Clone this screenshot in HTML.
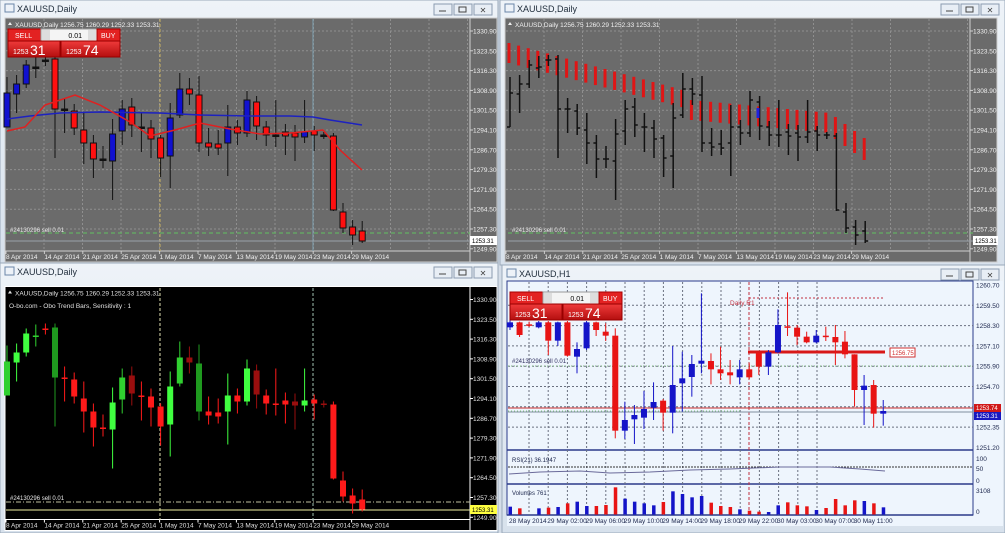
<!DOCTYPE html>
<html><head><meta charset="utf-8">
<style>
html,body{margin:0;padding:0;width:1005px;height:533px;overflow:hidden;background:#d4dde8;font-family:"Liberation Sans",sans-serif}
svg{display:block}
</style></head><body>
<svg id="s" width="1005" height="533" xmlns="http://www.w3.org/2000/svg" font-family="Liberation Sans, sans-serif"></svg>
<script>
(function(){
var S=document.getElementById('s'),o='';
function r(x,y,w,h,f,st){o+='<rect x="'+x+'" y="'+y+'" width="'+w+'" height="'+h+'" fill="'+f+'"'+(st?' stroke="'+st+'"':'')+'/>';}
function l(x1,y1,x2,y2,c,w,d){o+='<line x1="'+x1+'" y1="'+y1+'" x2="'+x2+'" y2="'+y2+'" stroke="'+c+'" stroke-width="'+(w||1)+'"'+(d?' stroke-dasharray="'+d+'"':'')+'/>';}
function t(x,y,s,c,fs,a){o+='<text x="'+x+'" y="'+y+'" fill="'+c+'" font-size="'+(fs||7)+'"'+(a?' text-anchor="'+a+'"':'')+'>'+s+'</text>';}
function win(x,y,w,h,title){
 o+='<defs><linearGradient id="g'+x+'_'+y+'" x1="0" y1="0" x2="0" y2="1"><stop offset="0" stop-color="#eef3f8"/><stop offset="1" stop-color="#d7e1ec"/></linearGradient></defs>';
 r(x,y,w,h,'url(#g'+x+'_'+y+')','#9aa9ba');
 r(x+5,y+4,9,8,'none','#6a86a8');
 t(x+17,y+12,title,'#1e2b3a',9);
 var bx=x+w-64;
 for(var i=0;i<3;i++){r(bx+i*20,y+4,18,11,'#e8eef5','#8a9bb0');}
 l(bx+5,y+11,bx+12,y+11,'#444');r(bx+25,y+7,7,5,'none','#444');t(bx+49,y+13,'✕','#444',8,'middle');
}
var D=[[127,93,77,127],[94,84,75,113],[84,65,60,88],[68,67,56,78],[60,60,55,66],[59,109,55,158],[109,109,98,133],[111,128,104,135],[130,143,113,164],[143,159,135,178],[159,159,146,168],[161,134,119,200],[131,109,100,145],[107,125,98,137],[127,127,113,152],[128,139,120,158],[138,158,135,177],[156,118,103,188],[115,89,73,118],[89,94,78,105],[95,143,76,152],[143,147,128,156],[144,148,130,155],[143,127,105,176],[127,133,120,145],[133,100,91,137],[102,126,96,140],[127,135,121,146],[135,135,100,147],[132,136,124,155],[133,137,125,161],[137,132,100,143],[131,135,126,151],[135,135,132,139],[136,210,133,211],[212,228,203,233],[227,235,220,245],[231,241,221,243]];
var dates=['8 Apr 2014','14 Apr 2014','21 Apr 2014','25 Apr 2014','1 May 2014','7 May 2014','13 May 2014','19 May 2014','23 May 2014','29 May 2014'];
var prices=['1330.90','1323.50','1316.30','1308.90','1301.50','1294.10','1286.70','1279.30','1271.90','1264.50','1257.30','1249.90'];
function dailyFrame(X,Y,bg,grid,axisc,txt){
 r(X+5,Y+18,492,244,bg);
 l(X+5,Y+251,X+470,Y+251,axisc);l(X+470,Y+18,X+470,Y+262,axisc);
 r(X+5,Y+18,492,244,'none',axisc);
 for(var i=0;i<12;i++){var yy=Y+31+i*19.8;if(i<11)l(X+6,yy,X+470,yy,grid,1,'2,2');t(X+473,yy+2.5,prices[i],txt,6.5);l(X+470,yy,X+473,yy,axisc);}
 for(var i=0;i<12;i++){var xx=X+44+i*38.5;if(xx<X+470)l(xx,Y+19,xx,Y+251,grid,1,'2,2');}
 for(var i=0;i<10;i++){t(X+6+i*38.4,Y+259,dates[i],txt,6.5);l(X+6+i*38.4,Y+251,X+6+i*38.4,Y+254,axisc);}
 t(X+15,Y+27,'XAUUSD,Daily  1256.75 1260.29 1252.33 1253.31',txt,6.5);
 o+='<path d="M'+(X+8)+' '+(Y+25)+'l2 -3 2 3z" fill="'+txt+'"/>';
}
function panel(x,y){
 r(x,y,33,12,'#e32222','#a00');t(x+7,y+9,'SELL','#fff',7);
 r(x+33,y,56,12,'#f4f4f4','#999');r(x+34,y+1,8,10,'#ddd');r(x+80,y+1,8,10,'#ddd');t(x+74,y+9,'0.01','#000',7,'end');
 r(x+89,y,23,12,'#e32222','#a00');t(x+93,y+9,'BUY','#fff',7);
 o+='<defs><linearGradient id="pb'+x+'" x1="0" y1="0" x2="0" y2="1"><stop offset="0" stop-color="#ef3a3a"/><stop offset="1" stop-color="#b40f0f"/></linearGradient></defs>';
 r(x,y+12,52,16,'url(#pb'+x+')','#900');r(x+53,y+12,59,16,'url(#pb'+x+')','#900');
 t(x+5,y+25,'1253','#fff',7);t(x+22,y+26,'31','#fff',14);
 t(x+58,y+25,'1253','#fff',7);t(x+75,y+26,'74','#fff',14);
}
win(0,0,498,265,'XAUUSD,Daily');
win(500,0,505,265,'XAUUSD,Daily');
win(0,263,498,270,'XAUUSD,Daily');
win(502,265,503,268,'XAUUSD,H1');
// ---- top-left
dailyFrame(0,0,'#6b6b6b','#8f8f8f','#cfcfcf','#f0f0f0');
l(160,19,160,251,'#c8b060',1,'3,2');l(313,19,313,251,'#7fa0b0');
l(6,233,470,233,'#60c060',1,'4,3');l(6,241,470,241,'#9aa0a8');
t(10,232,'#24130296 sell 0.01','#e8e8e8',6);
r(470,236,27,9,'#fff');t(472,243,'1253.31','#000',6);
var i,d,x,tp,hh,bull,c;
for(i=0;i<D.length;i++){d=D[i];x=7+i*9.6;l(x,d[2],x,d[3],'#111');tp=Math.min(d[0],d[1]);hh=Math.max(Math.abs(d[0]-d[1]),1.5);
 bull=d[1]<d[0];r(x-3,tp,6,hh,Math.abs(d[0]-d[1])<2?'#111':(bull?'#1010d0':'#ff1010'),'#111');}
o+='<polyline fill="none" stroke="#1d22c0" stroke-width="1.5" points="7,119 30,116 60,113 100,112 160,113 200,115 250,116 290,116 313,117 330,120 362,125"/>';
o+='<polyline fill="none" stroke="#e02020" stroke-width="1.5" points="7,131 25,127 45,105 75,95 100,105 130,122 150,136 175,130 200,123 230,129 260,134 290,133 323,130 340,150 362,170"/>';
panel(8,29);
// ---- top-right
dailyFrame(500,0,'#6b6b6b','#8f8f8f','#cfcfcf','#f0f0f0');
l(508,233,973,233,'#60c060',1,'4,3');l(508,241,973,241,'#9aa0a8');
t(512,232,'#24130296 sell 0.01','#e8e8e8',6);r(973,236,25,9,'#fff');t(975,243,'1253.31','#000',6);
for(i=0;i<D.length;i++){d=D[i];x=509+i*9.6;
 var rt=43+i*2.6,rb=rt+20-i*0.15; if(i>18){rt=100+(i-19)*0.9;rb=rt+20;} if(i>33){rt=117+(i-34)*7;rb=rt+22;}
 l(x,rt,x,rb,'#e01515',3);
 l(x+1,d[2],x+1,d[3],'#111',1.5);l(x-2,d[0],x+1,d[0],'#111',1.5);l(x+1,d[1],x+4,d[1],'#111',1.5);}
l(758,108,758,118,'#2020e0',3);
// ---- bottom-left
dailyFrame(0,268.5,'#000','#000','#ffffff','#e0e0e0');
t(9,308,'O-bo.com - Obo Trend Bars, Sensitivity : 1','#e0e0e0',6.5);
l(160,288,160,520,'#e0e0b0',1,'3,2');l(313,288,313,520,'#a0c0b0',1,'3,2');
l(6,502,470,502,'#c0c0a0',1,'5,2,1,2');l(6,510,470,510,'#f0f0a0');
t(10,500,'#24130296 sell 0.01','#e8e8e8',6);r(470,505,27,9,'#ffff40');t(472,512,'1253.31','#000',6);
for(i=0;i<D.length;i++){d=D[i];x=7+i*9.6;bull=d[1]<d[0];
 c=bull?(i%3==0?'#30d030':'#40ff40'):([12,13,17,19,26,30,33].indexOf(i)>=0?'#9a0e0e':'#ff1a1a');
 if(i==20||i==5)c='#1f9a1f';
 l(x,d[2]+268.5,x,d[3]+268.5,c);tp=Math.min(d[0],d[1])+268.5;hh=Math.max(Math.abs(d[0]-d[1]),1.5);r(x-3,tp,6,hh,c);}
// ---- bottom-right H1
var H=[[187,172,165,195],[172,210,170,216],[178,178,170,186],[187,172,168,190],[172,227,168,270],[227,172,170,243],[172,272,168,275],[275,252,232,325],[250,172,168,255],[172,195,170,213],[200,212,175,228],[212,497,190,520],[497,465,410,522],[463,450,420,537],[458,432,378,492],[428,411,352,465],[407,443,402,497],[443,360,243,505],[355,340,260,440],[336,297,270,395],[296,287,85,325],[288,313,265,358],[313,325,245,345],[322,331,285,358],[337,313,285,358],[313,337,295,342],[262,305,262,330],[305,262,255,330],[262,180,133,265],[184,186,82,213],[188,215,180,240],[215,232,200,235],[232,212,195,235],[212,216,185,228],[216,232,180,300],[230,268,198,280],[268,375,268,425],[375,362,330,480],[360,446,345,488],[446,438,405,482]];
var V=[200,205,224,205,203,201,190,185,198,198,195,142,176,185,190,196,186,154,162,172,168,188,198,201,208,212,215,216,196,187,196,199,210,204,177,196,181,183,190,202];
r(507,281,496,245,'#eef5fd');
r(507,281,466,234,'none','#2a3a8a');
l(507,450,973,450,'#2a3a8a',1.5);l(507,484,973,484,'#2a3a8a',1.5);l(507,515,973,515,'#2a3a8a',1.5);
var hp=['1260.70','1259.50','1258.30','1257.10','1255.90','1254.70','1253.50','1252.35','1251.20'];
for(i=0;i<9;i++){var yy=285+i*20.3;if(i<8&&i>0)l(508,yy,973,yy,'#6a7080',1,'2,2');if(i!=6)t(976,yy+2.5,hp[i],'#202a50',6.5);}
for(i=0;i<16;i++){var xx=529+i*19.2;l(xx,282,xx,515,'#6a7080',1,'2,2');}
l(508,467,973,467,'#333',1,'2,1');
l(749,282,749,515,'#c03040',1,'3,2');
t(976,461,'100','#202a50',6.5);t(976,471,'50','#202a50',6.5);t(976,483,'0','#202a50',6.5);t(976,493,'3108','#202a50',6.5);t(976,514,'0','#202a50',6.5);
t(512,462,'RSI(21) 36.1947','#202a50',6);t(512,495,'Volumes 761','#202a50',6);
o+='<polyline fill="none" stroke="#6a6a9a" points="509,474 540,472 580,471 610,473 650,472 690,470 730,469 780,467 830,467 860,469 885,471"/>';
l(749,298,883,298,'#c03040',1,'2,2');t(730,305,'Daily R1','#c03040',6.5);
l(508,366,973,366,'#80c080',1,'1,2');
l(508,408,973,408,'#cc3030');l(508,411,740,411,'#80c080',1,'1,2');l(508,412,973,412,'#8090a0');
t(512,363,'#24130296 sell 0.01','#303060',6);
l(748,352,885,352,'#d81818',3);r(890,348,25,9,'#fff','#d03030');t(892,355,'1256.75','#d03030',6);
r(974,404,27,8,'#d01818');t(976,410,'1253.74','#fff',6);r(974,412,27,8,'#1818c0');t(976,418,'1253.31','#fff',6);
for(i=0;i<H.length;i++){d=H[i];x=510+i*9.57;bull=d[1]<d[0];c=bull?'#1414c8':'#e81414';
 var vt=440+V[i]/3;r(x-1.5,vt,3.5,514.5-vt,c);
 var y0=265+d[0]/3,y1=265+d[1]/3;if(y1<282&&y0<282)continue;
 l(x,Math.max(282,265+d[2]/3),x,265+d[3]/3,c);tp=Math.max(Math.min(y0,y1),282);hh=Math.max(Math.max(y0,y1)-tp,1.5);r(x-3,tp,6,hh,c);}
var hd=['28 May 2014','29 May 02:00','29 May 06:00','29 May 10:00','29 May 14:00','29 May 18:00','29 May 22:00','30 May 03:00','30 May 07:00','30 May 11:00'];
for(i=0;i<10;i++)t(509+i*38.3,523,hd[i],'#202a50',6.5);
panel(510,292);
S.innerHTML=o;
})();
</script>
</body></html>
